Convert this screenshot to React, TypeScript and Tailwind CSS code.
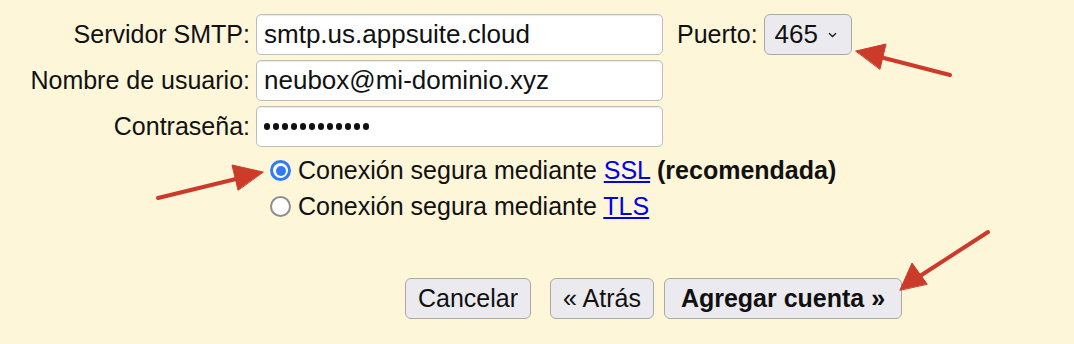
import React from "react";

const font = { fontFamily: '"Liberation Sans", Arial, sans-serif' };

function Field({ label, value, password }: { label: string; value: string; password?: boolean }) {
  return (
    <>
      <label className="flex h-[41px] items-center justify-end whitespace-nowrap">{label}</label>
      <div className="flex h-[41px] w-[407px] items-center rounded-[5px] border border-[#bdbdbd] bg-white px-[7px] text-[26px] shadow-[inset_0_1px_1px_rgba(0,0,0,0.08)]">
        {password ? (
          <span className="flex gap-[2.6px]">
            {Array.from({ length: 12 }).map((_, i) => (
              <span key={i} className="h-[6.4px] w-[6.4px] rounded-full bg-[#111]" />
            ))}
          </span>
        ) : (
          <span>{value}</span>
        )}
      </div>
    </>
  );
}

function Radio({ checked }: { checked?: boolean }) {
  return checked ? (
    <span className="flex h-[21px] w-[21px] items-center justify-center rounded-full bg-[#2f7bf5]">
      <span className="flex h-[15px] w-[15px] items-center justify-center rounded-full bg-white">
        <span className="h-[10px] w-[10px] rounded-full bg-[#2f7bf5]" />
      </span>
    </span>
  ) : (
    <span className="h-[21px] w-[21px] rounded-full border-[2.5px] border-[#8e8e8e] bg-white" />
  );
}

function Button({ children, bold }: { children: React.ReactNode; bold?: boolean }) {
  return (
    <button
      className={
        "h-[41px] rounded-[6px] border border-[#a9a9a9] bg-[#ebebef] text-[#111] " +
        (bold ? "px-[16px] font-bold" : "px-[12px]")
      }
    >
      {children}
    </button>
  );
}

export default function App() {
  return (
    <div style={font} className="relative h-[344px] w-[1074px] overflow-hidden bg-[#fdf6d9] text-[25px] text-[#111]">
      <div className="flex pt-[14px]">
        <div className="grid grid-cols-[250px_407px] gap-x-[6px] gap-y-[5px]">
          <Field label="Servidor SMTP:" value="smtp.us.appsuite.cloud" />
          <Field label="Nombre de usuario:" value="neubox@mi-dominio.xyz" />
          <Field label="Contraseña:" value="" password />
        </div>
        <div className="ml-[14px] flex h-[41px] items-center gap-[6px]">
          <span>Puerto:</span>
          <div className="flex h-[41px] w-[88px] items-center rounded-[6px] border border-[#a9a9a9] bg-[#ebebef] pl-[10px] text-[26px]">
            <span>465</span>
            <svg className="ml-[10px]" width="9" height="6" viewBox="0 0 9 6">
              <path d="M1 1.2 L4.5 4.6 L8 1.2" fill="none" stroke="#222" strokeWidth="1.4" />
            </svg>
          </div>
        </div>
      </div>

      <div className="mt-[13px] flex flex-col gap-[15px] pl-[270px]">
        <div className="flex h-[21px] items-center gap-[7px]">
          <Radio checked />
          <span>
            Conexión segura mediante <a className="text-[#0000ee] underline">SSL</a>{" "}
            <b>(recomendada)</b>
          </span>
        </div>
        <div className="flex h-[21px] items-center gap-[7px]">
          <Radio />
          <span>
            Conexión segura mediante <a className="text-[#0000ee] underline">TLS</a>
          </span>
        </div>
      </div>

      <div className="mt-[61px] flex pl-[405px]">
        <Button>Cancelar</Button>
        <div className="ml-[19px] flex gap-[10px]">
          <Button>« Atrás</Button>
          <Button bold>Agregar cuenta »</Button>
        </div>
      </div>

      <svg className="pointer-events-none absolute inset-0" width="1074" height="344">
        <g fill="#cc3a2a" stroke="#cc3a2a" strokeWidth="4" strokeLinecap="round">
          <line x1="950" y1="75" x2="880" y2="57" />
          <polygon points="856,51 886,44 880,69" strokeWidth="1" strokeLinejoin="round" />
          <line x1="158" y1="198" x2="240" y2="178" />
          <polygon points="263,172 232,165 238,190" strokeWidth="1" strokeLinejoin="round" />
          <line x1="988" y1="232" x2="920" y2="276" />
          <polygon points="900,290 912,263 927,284" strokeWidth="1" strokeLinejoin="round" />
        </g>
      </svg>
    </div>
  );
}
